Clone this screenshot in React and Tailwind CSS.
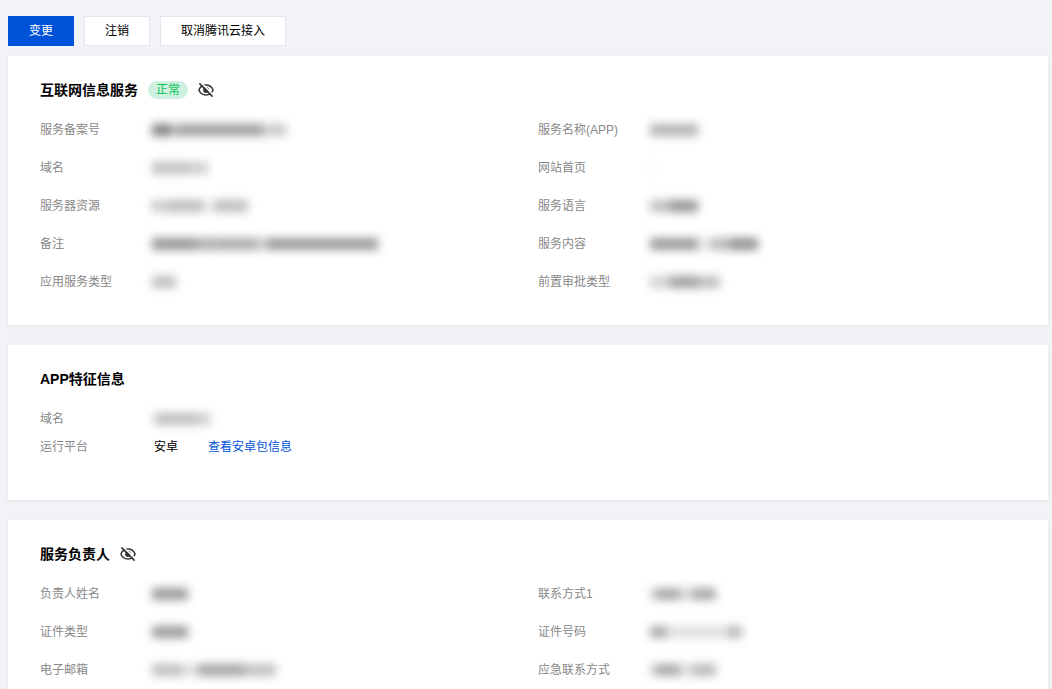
import React from "react";

// Each masked value is a run of [width, darkness] strips, softened into a blur.
const SERVICE = [
  { label: "服务备案号", mask: [[20, 0.5], [4, 0.15], [88, 0.38], [4, 0.12], [18, 0.22]] },
  { label: "服务名称(APP)", mask: [[48, 0.3]] },
  { label: "域名", mask: [[40, 0.25], [4, 0.14], [12, 0.2]] },
  { label: "网站首页", mask: [[6, 0.03]] },
  { label: "服务器资源", mask: [[8, 0.25], [4, 0.1], [40, 0.26], [10, 0.06], [34, 0.26]] },
  { label: "服务语言", mask: [[20, 0.26], [28, 0.42]] },
  { label: "备注", mask: [[44, 0.42], [24, 0.32], [38, 0.34], [8, 0.16], [112, 0.4]] },
  { label: "服务内容", mask: [[48, 0.4], [12, 0.08], [20, 0.28], [28, 0.44]] },
  { label: "应用服务类型", mask: [[24, 0.26]] },
  { label: "前置审批类型", mask: [[20, 0.18], [28, 0.38], [22, 0.26]] },
];

const OWNER = [
  { label: "负责人姓名", mask: [[36, 0.4]] },
  { label: "联系方式1", mask: [[6, 0.16], [24, 0.34], [12, 0.14], [24, 0.34]] },
  { label: "证件类型", mask: [[36, 0.4]] },
  { label: "证件号码", mask: [[16, 0.34], [62, 0.12], [14, 0.28]] },
  { label: "电子邮箱", mask: [[30, 0.26], [16, 0.12], [46, 0.36], [32, 0.25]] },
  { label: "应急联系方式", mask: [[6, 0.16], [24, 0.34], [12, 0.12], [24, 0.28]] },
];

function Masked({ strips }) {
  return (
    <span className="flex items-center pl-[2px] blur-[5px]" aria-hidden="true">
      {strips.map(([width, darkness], i) => (
        <span
          key={i}
          className="h-3 bg-black"
          style={{ width, opacity: darkness }}
        />
      ))}
    </span>
  );
}

function EyeOffButton({ label }) {
  return (
    <button type="button" aria-label={label} className="cursor-pointer">
      <svg width="16" height="16" viewBox="0 0 16 16" fill="none">
        <path
          d="M0.900 8C2.300 4.600 4.900 3 8 3s5.700 1.600 7.100 5c-1.400 3.400-4 5-7.100 5S2.300 11.400 0.900 8Z"
          stroke="#333"
          strokeWidth="1.500"
        />
        <circle cx="8" cy="8" r="2.900" fill="#333" />
        <path d="M2.700 0.400 15.800 13.500" stroke="#fff" strokeWidth="1.600" />
        <path d="M1.400 1.400 14.600 14.600" stroke="#333" strokeWidth="1.500" />
      </svg>
    </button>
  );
}

function Field({ label, children }) {
  return (
    <div className="flex leading-5">
      <dt className="w-[110px] shrink-0 text-[#888]">{label}</dt>
      <dd className="flex min-w-0 items-center">{children}</dd>
    </div>
  );
}

function FieldGrid({ fields }) {
  return (
    <dl className="grid grid-cols-2 gap-x-5 gap-y-[18px]">
      {fields.map((field) => (
        <Field key={field.label} label={field.label}>
          <Masked strips={field.mask} />
        </Field>
      ))}
    </dl>
  );
}

function Card({ title, extra, className, children }) {
  return (
    <section className={`bg-white px-8 pt-6 shadow-[0_1px_3px_rgba(54,58,80,0.08)] ${className}`}>
      <header className="mb-5 flex h-5 items-center gap-[10px]">
        <h2 className="text-sm leading-5 font-bold text-black">{title}</h2>
        {extra}
      </header>
      {children}
    </section>
  );
}

function ActionButton({ primary, children }) {
  return (
    <button
      type="button"
      className={
        primary
          ? "h-[30px] cursor-pointer border border-[#0052d9] bg-[#0052d9] px-5 text-white"
          : "h-[30px] cursor-pointer border border-[#e2e6f0] bg-white px-5 text-black"
      }
    >
      {children}
    </button>
  );
}

export default function App() {
  return (
    <main
      lang="zh-CN"
      className="min-h-screen bg-[#f2f3f7] pt-4 pr-1 pl-2 font-['Liberation_Sans','Noto_Sans_CJK_SC',sans-serif] text-xs text-black"
    >
      <div className="mb-[10px] flex gap-[10px]">
        <ActionButton primary>变更</ActionButton>
        <ActionButton>注销</ActionButton>
        <ActionButton>取消腾讯云接入</ActionButton>
      </div>

      <div className="flex flex-col gap-5">
        <Card
          title="互联网信息服务"
          className="pb-[33px]"
          extra={
            <>
              <span className="rounded-full bg-[#cef2df] px-2 text-xs leading-[18px] text-[#0abf5b]">
                正常
              </span>
              <EyeOffButton label="显示互联网信息服务" />
            </>
          }
        >
          <FieldGrid fields={SERVICE} />
        </Card>

        <Card title="APP特征信息" className="pb-[43px]">
          <dl className="flex flex-col gap-2">
            <Field label="域名">
              <Masked strips={[[4, 0.1], [40, 0.26], [14, 0.2]]} />
            </Field>
            <Field label="运行平台">
              <span className="pl-1">安卓</span>
              <a href="#android-package" className="ml-[30px] text-[#0052d9]">
                查看安卓包信息
              </a>
            </Field>
          </dl>
        </Card>

        <Card
          title="服务负责人"
          className="pb-[33px]"
          extra={<EyeOffButton label="显示服务负责人" />}
        >
          <FieldGrid fields={OWNER} />
        </Card>
      </div>
    </main>
  );
}
